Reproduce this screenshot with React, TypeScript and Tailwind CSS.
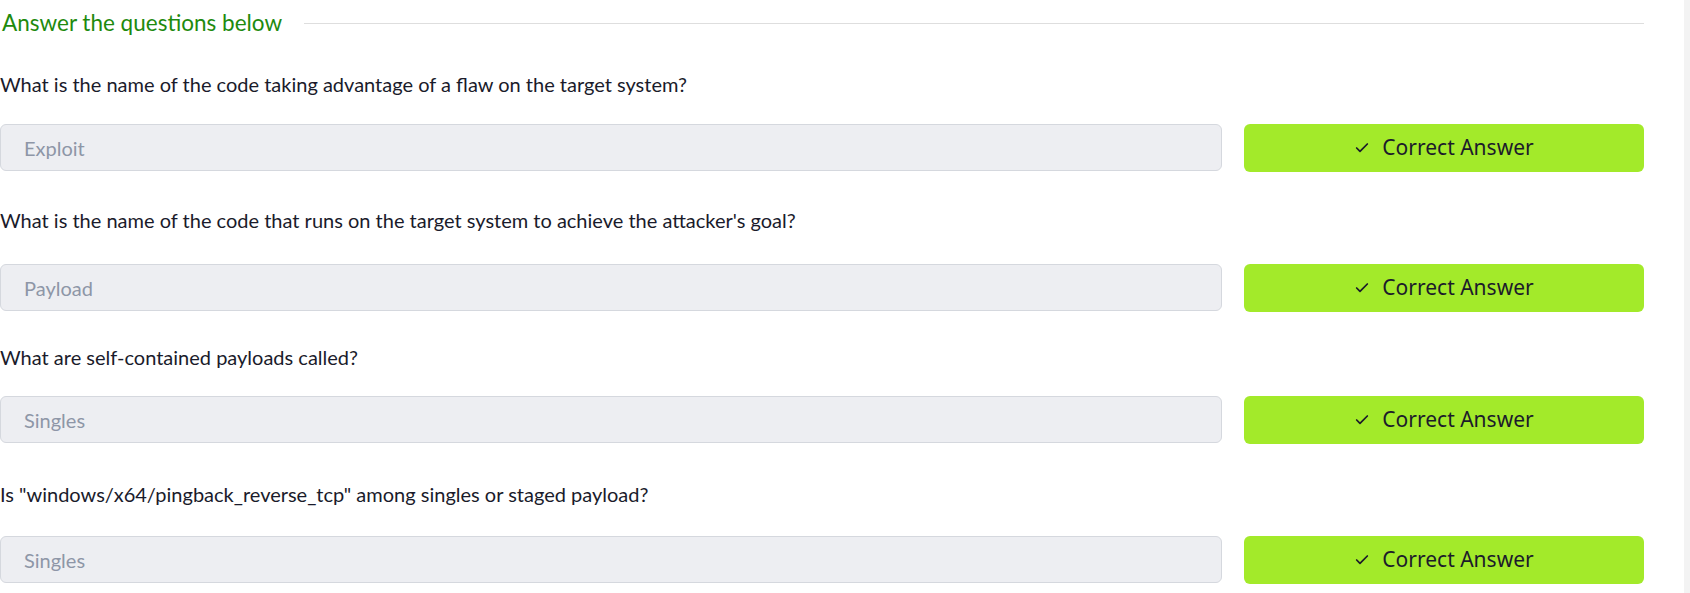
import React from "react";

const rows = [
  { q: "What is the name of the code taking advantage of a flaw on the target system?", a: "Exploit", qmt: "mt-[34px]", imt: "mt-[28px]" },
  { q: "What is the name of the code that runs on the target system to achieve the attacker's goal?", a: "Payload", qmt: "mt-[36px]", imt: "mt-[32px]" },
  { q: "What are self-contained payloads called?", a: "Singles", qmt: "mt-[33px]", imt: "mt-[27px]" },
  { q: "Is \"windows/x64/pingback_reverse_tcp\" among singles or staged payload?", a: "Singles", qmt: "mt-[38px]", imt: "mt-[30px]" },
];

function Check() {
  return (
    <svg width="16" height="16" viewBox="0 0 24 24" fill="none" stroke="currentColor" strokeWidth="2.6" strokeLinecap="round" strokeLinejoin="round">
      <path d="M20 6 9 17l-5-5" />
    </svg>
  );
}

export default function App() {
  return (
    <div className="flex w-[1690px] h-[593px] bg-white overflow-hidden">
      <div className="w-[1644px] shrink-0 font-['Lato',sans-serif] text-[#1a1b2b]">
        <div className="flex items-center h-[30px] mt-[8px]">
          <div className="text-[22.5px] leading-[30px] text-[#1e8a0e] pl-[2px]">Answer the questions below</div>
          <div className="flex-1 ml-[22px] h-px bg-[#dedede]"></div>
        </div>
        {rows.map((r, i) => (
          <div key={i} className={r.qmt}>
            <div className="text-[20px] leading-[24px]">{r.q}</div>
            <div className={"flex gap-[22px] " + r.imt}>
              <div className="flex-1 h-[47px] rounded-[6px] border border-[#d5d8de] bg-[#edeef2] flex items-center pl-[23px] text-[20px] text-[#8e96a7]">
                {r.a}
              </div>
              <div className="w-[400px] h-[48px] rounded-[6px] bg-[#a3ea2a] flex items-center justify-center gap-[12px] text-[#1c1b2b] font-['Noto_Sans',sans-serif] text-[21px]">
                <Check />
                <span>Correct Answer</span>
              </div>
            </div>
          </div>
        ))}
      </div>
      <div className="flex-1"></div>
      <div className="w-[6px] bg-[#f3f3f3]"></div>
    </div>
  );
}
